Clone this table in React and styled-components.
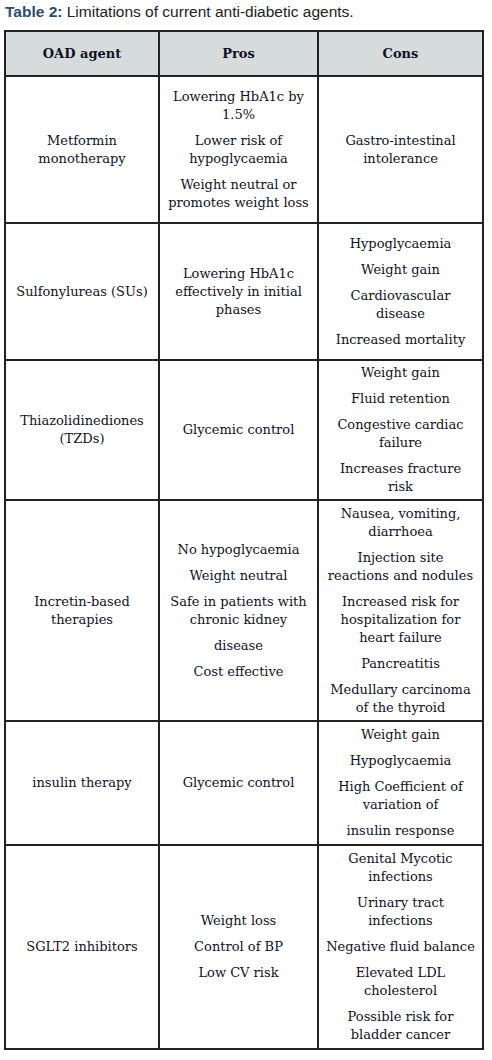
import React from "react";
import styled, { createGlobalStyle } from "styled-components";

const GlobalStyle = createGlobalStyle`
  body {
    margin: 0;
    background: #fff;
  }
`;

const Page = styled.div`
  padding: 3px 11px 0 4px;
`;

const Caption = styled.div`
  font-family: "Liberation Sans", Arial, sans-serif;
  font-size: 15.5px;
  line-height: 17px;
  color: #222;
  padding-left: 1px;
  margin-bottom: 10px;
  b {
    color: #2c4a72;
  }
`;

const Table = styled.table`
  width: 478px;
  border-collapse: collapse;
  table-layout: fixed;
  font-family: "DejaVu Serif", Cambria, serif;
  font-size: 13px;
  color: #111126;
  border: 2px solid #222;
`;

const HeadCell = styled.th`
  height: 43px;
  background: #d6dcdc;
  border: 2px solid #222;
  font-weight: bold;
  text-align: center;
  vertical-align: middle;
  padding: 0;
`;

const Row = styled.tr`
  height: ${(p) => p.$h}px;
`;

const Cell = styled.td`
  border: 2px solid #222;
  text-align: center;
  vertical-align: middle;
  padding: 3px 0;
  white-space: nowrap;
`;

const Item = styled.p`
  margin: 0;
  line-height: 18px;
  & + & {
    margin-top: 8px;
  }
`;

// each item is a list of its printed lines
const rows = [
  {
    h: 147,
    agent: [["Metformin", "monotherapy"]],
    pros: [["Lowering HbA1c by", "1.5%"], ["Lower risk of", "hypoglycaemia"], ["Weight neutral or", "promotes weight loss"]],
    cons: [["Gastro-intestinal", "intolerance"]],
  },
  {
    h: 137,
    agent: [["Sulfonylureas (SUs)"]],
    pros: [["Lowering HbA1c", "effectively in initial", "phases"]],
    cons: [["Hypoglycaemia"], ["Weight gain"], ["Cardiovascular", "disease"], ["Increased mortality"]],
  },
  {
    h: 140,
    agent: [["Thiazolidinediones", "(TZDs)"]],
    pros: [["Glycemic control"]],
    cons: [["Weight gain"], ["Fluid retention"], ["Congestive cardiac", "failure"], ["Increases fracture", "risk"]],
  },
  {
    h: 221,
    agent: [["Incretin-based", "therapies"]],
    pros: [["No hypoglycaemia"], ["Weight neutral"], ["Safe in patients with", "chronic kidney"], ["disease"], ["Cost effective"]],
    cons: [
      ["Nausea, vomiting,", "diarrhoea"],
      ["Injection site", "reactions and nodules"],
      ["Increased risk for", "hospitalization for", "heart failure"],
      ["Pancreatitis"],
      ["Medullary carcinoma", "of the thyroid"],
    ],
  },
  {
    h: 124,
    agent: [["insulin therapy"]],
    pros: [["Glycemic control"]],
    cons: [["Weight gain"], ["Hypoglycaemia"], ["High Coefficient of", "variation of"], ["insulin response"]],
  },
  {
    h: 204,
    agent: [["SGLT2 inhibitors"]],
    pros: [["Weight loss"], ["Control of BP"], ["Low CV risk"]],
    cons: [
      ["Genital Mycotic", "infections"],
      ["Urinary tract", "infections"],
      ["Negative fluid balance"],
      ["Elevated LDL", "cholesterol"],
      ["Possible risk for", "bladder cancer"],
    ],
  },
];

const Items = ({ list }) =>
  list.map((lines, i) => (
    <Item key={i}>
      {lines.map((l, j) => (
        <React.Fragment key={j}>
          {j > 0 && <br />}
          {l}
        </React.Fragment>
      ))}
    </Item>
  ));

export default function App() {
  return (
    <Page>
      <GlobalStyle />
      <Caption>
        <b>Table 2:</b> Limitations of current anti-diabetic agents.
      </Caption>
      <Table>
        <colgroup>
          <col style={{ width: 154 }} />
          <col style={{ width: 159 }} />
          <col style={{ width: 165 }} />
        </colgroup>
        <thead>
          <tr>
            <HeadCell>OAD agent</HeadCell>
            <HeadCell>Pros</HeadCell>
            <HeadCell>Cons</HeadCell>
          </tr>
        </thead>
        <tbody>
          {rows.map((r, i) => (
            <Row key={i} $h={r.h}>
              <Cell>
                <Items list={r.agent} />
              </Cell>
              <Cell>
                <Items list={r.pros} />
              </Cell>
              <Cell>
                <Items list={r.cons} />
              </Cell>
            </Row>
          ))}
        </tbody>
      </Table>
    </Page>
  );
}
